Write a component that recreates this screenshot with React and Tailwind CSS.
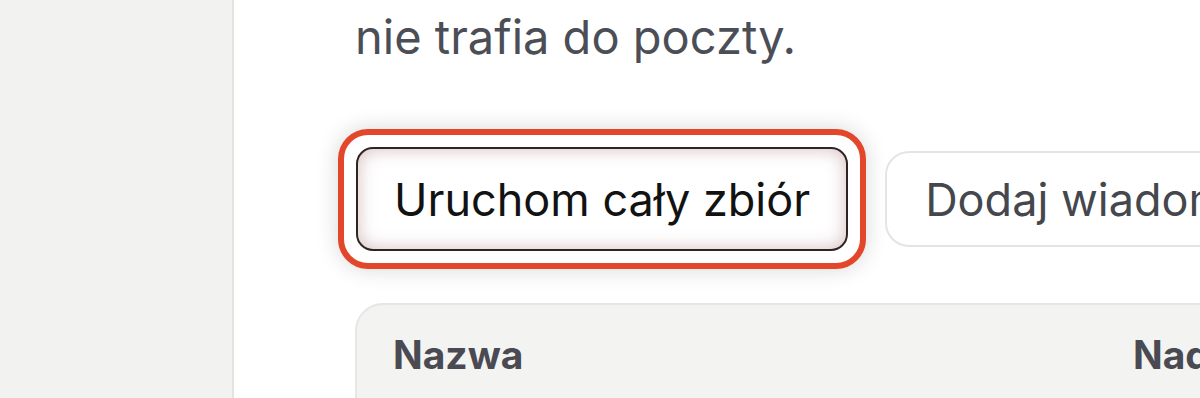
export default function App() {
  return (
    <div className="h-[398px] w-[1200px] flex overflow-hidden bg-white font-['Inter',sans-serif]">
      {/* Sidebar */}
      <aside className="w-[234px] shrink-0 bg-[#f2f2f1] border-r-2 border-[#e3e3e2]" />

      {/* Main */}
      <main className="flex-1 min-w-0 pl-[121px] pt-[7px] overflow-hidden">
        <p className="text-[47px] leading-[60px] text-[#4b4e56] whitespace-nowrap">
          nie trafia do poczty.
        </p>

        {/* Actions */}
        <div className="mt-[80px] flex items-center gap-[37px]">
          {/* Highlight ring around primary action */}
          <div className="-m-[18px] ml-[-17px] p-[12px] rounded-[30px] border-[6px] border-[#e2462b] shadow-[0_0_22px_rgba(0,0,0,0.16)] shrink-0">
            <button className="h-[104px] px-[36px] rounded-[17px] border-2 border-[#2e2424] bg-white shadow-[inset_0_0_18px_rgba(150,90,90,0.4)] text-[45px] leading-none text-[#121212] whitespace-nowrap">
              Uruchom cały zbiór
            </button>
          </div>
          <button className="h-[96px] px-[38px] rounded-[24px] border-2 border-[#e4e4e4] bg-white text-[45px] leading-none text-[#45474e] whitespace-nowrap shrink-0">
            Dodaj wiadomość
          </button>
        </div>

        {/* Table */}
        <div className="mt-[52px] w-[1000px] h-[200px] bg-[#f3f3f2] border-2 border-[#e6e6e5] rounded-tl-[28px]">
          <div className="flex pl-[36px] pt-[27px] text-[39px] leading-[46px] font-bold text-[#4a4a52] whitespace-nowrap">
            <span className="w-[740px]">Nazwa</span>
            <span>Nadawca</span>
          </div>
        </div>
      </main>
    </div>
  )
}
